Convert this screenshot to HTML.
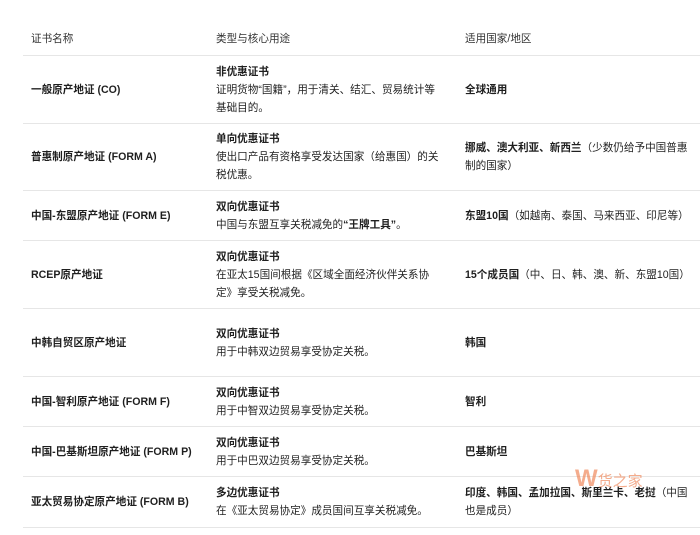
<!DOCTYPE html>
<html><head><meta charset="utf-8"><style>
body{margin:0;width:700px;height:535px;background:#fff;overflow:hidden;font-family:"Liberation Sans","Noto Sans CJK SC",sans-serif;font-size:10.6px;color:#1f1f1f;position:relative}
.r{position:absolute;left:23px;right:0;border-bottom:1px solid #e6e6e6}
.c{position:absolute;display:flex;flex-direction:column;justify-content:center;line-height:18px}
.c1{left:31px;width:180px}.c2{left:216px;width:228px}.c3{left:465px;width:228px}
b{font-weight:bold}
.h{color:#333}
</style></head><body>
<div class="r" style="top:0;height:55px"></div>
<div class="c c1 h" style="top:30px;height:18px">证书名称</div>
<div class="c c2 h" style="top:30px;height:18px">类型与核心用途</div>
<div class="c c3 h" style="top:30px;height:18px">适用国家/地区</div>

<div class="r" style="top:56px;height:67px"></div>
<div class="c c1" style="top:56px;height:67px"><b>一般原产地证 (CO)</b></div>
<div class="c c2" style="top:56px;height:67px"><b>非优惠证书</b><span>证明货物“国籍”，用于清关、结汇、贸易统计等基础目的。</span></div>
<div class="c c3" style="top:56px;height:67px"><b>全球通用</b></div>

<div class="r" style="top:124px;height:66px"></div>
<div class="c c1" style="top:124px;height:66px"><b>普惠制原产地证 (FORM A)</b></div>
<div class="c c2" style="top:124px;height:66px"><b>单向优惠证书</b><span>使出口产品有资格享受发达国家（给惠国）的关税优惠。</span></div>
<div class="c c3" style="top:124px;height:66px"><span><b>挪威、澳大利亚、新西兰</b>（少数仍给予中国普惠制的国家）</span></div>

<div class="r" style="top:191px;height:49px"></div>
<div class="c c1" style="top:191px;height:49px"><b>中国-东盟原产地证 (FORM E)</b></div>
<div class="c c2" style="top:191px;height:49px"><b>双向优惠证书</b><span>中国与东盟互享关税减免的<b>“王牌工具”</b>。</span></div>
<div class="c c3" style="top:191px;height:49px"><span><b>东盟10国</b>（如越南、泰国、马来西亚、印尼等）</span></div>

<div class="r" style="top:241px;height:67px"></div>
<div class="c c1" style="top:241px;height:67px"><b>RCEP原产地证</b></div>
<div class="c c2" style="top:241px;height:67px"><b>双向优惠证书</b><span>在亚太15国间根据《区域全面经济伙伴关系协定》享受关税减免。</span></div>
<div class="c c3" style="top:241px;height:67px"><span><b>15个成员国</b>（中、日、韩、澳、新、东盟10国）</span></div>

<div class="r" style="top:309px;height:67px"></div>
<div class="c c1" style="top:309px;height:67px"><b>中韩自贸区原产地证</b></div>
<div class="c c2" style="top:309px;height:67px"><b>双向优惠证书</b><span>用于中韩双边贸易享受协定关税。</span></div>
<div class="c c3" style="top:309px;height:67px"><b>韩国</b></div>

<div class="r" style="top:377px;height:49px"></div>
<div class="c c1" style="top:377px;height:49px"><b>中国-智利原产地证 (FORM F)</b></div>
<div class="c c2" style="top:377px;height:49px"><b>双向优惠证书</b><span>用于中智双边贸易享受协定关税。</span></div>
<div class="c c3" style="top:377px;height:49px"><b>智利</b></div>

<div class="r" style="top:427px;height:49px"></div>
<div class="c c1" style="top:427px;height:49px"><b>中国-巴基斯坦原产地证 (FORM P)</b></div>
<div class="c c2" style="top:427px;height:49px"><b>双向优惠证书</b><span>用于中巴双边贸易享受协定关税。</span></div>
<div class="c c3" style="top:427px;height:49px"><b>巴基斯坦</b></div>

<div class="r" style="top:477px;height:50px"></div>
<div class="c c1" style="top:477px;height:50px"><b>亚太贸易协定原产地证 (FORM B)</b></div>
<div class="c c2" style="top:477px;height:50px"><b>多边优惠证书</b><span>在《亚太贸易协定》成员国间互享关税减免。</span></div>
<div class="c c3" style="top:477px;height:50px"><span><b>印度、韩国、孟加拉国、斯里兰卡、老挝</b>（中国也是成员）</span></div>

<div style="position:absolute;left:575px;top:465px;font-size:24px;color:#f08a5d;opacity:.7;font-weight:bold">W<span style="font-size:15px;font-weight:normal">货之家</span></div>
</body></html>
